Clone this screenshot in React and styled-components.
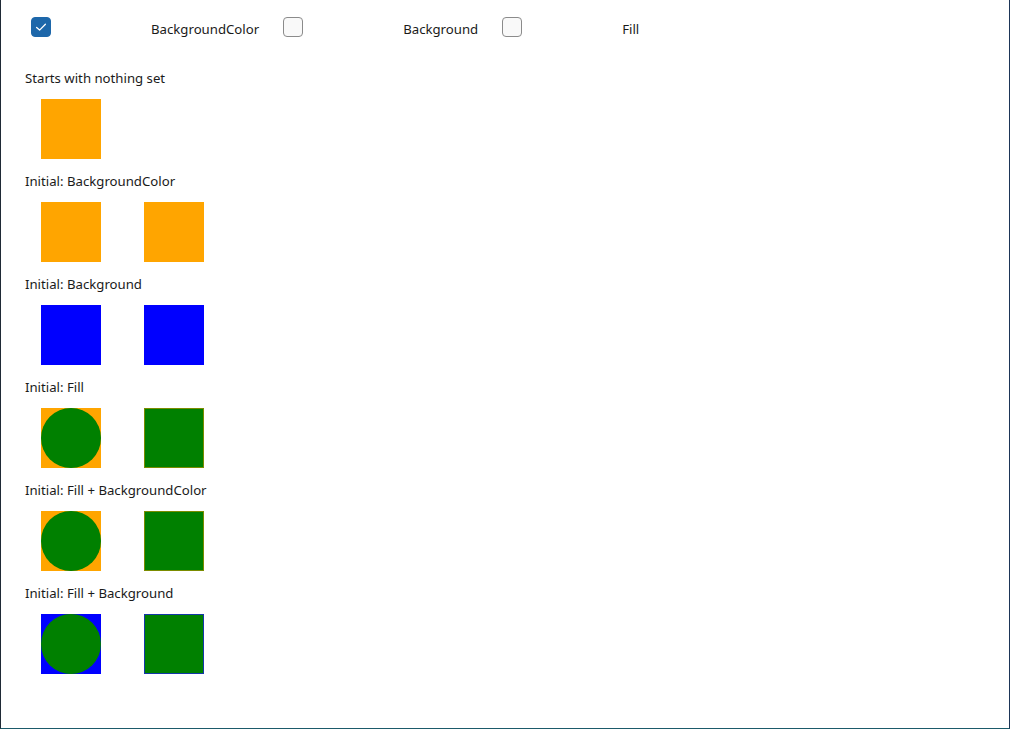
import React from 'react';
import styled, { createGlobalStyle } from 'styled-components';

const GlobalStyle = createGlobalStyle`
    html, body {
        margin: 0;
        padding: 0;
        background: #ffffff;
    }
    * {
        box-sizing: border-box;
    }
`;

const ORANGE = '#ffa500';
const BLUE = '#0000ff';
const GREEN = '#008000';

const sections = [
    { title: 'Starts with nothing set', items: [{ bg: ORANGE }] },
    { title: 'Initial: BackgroundColor', items: [{ bg: ORANGE }, { bg: ORANGE }] },
    { title: 'Initial: Background', items: [{ bg: BLUE }, { bg: BLUE }] },
    { title: 'Initial: Fill', items: [{ bg: ORANGE, circle: true }, { bg: GREEN, edge: '#7a8c00' }] },
    { title: 'Initial: Fill + BackgroundColor', items: [{ bg: ORANGE, circle: true }, { bg: GREEN, edge: '#7a8c00' }] },
    { title: 'Initial: Fill + Background', items: [{ bg: BLUE, circle: true }, { bg: GREEN, edge: '#1438a8' }] },
];

const toggles = [
    { label: 'BackgroundColor', checked: true },
    { label: 'Background', checked: false },
    { label: 'Fill', checked: false },
];

const App = () => {
    return (
        <>
            <GlobalStyle />
            <Window>
                <Toolbar>
                    {toggles.map((t) => (
                        <React.Fragment key={t.label}>
                            <CheckSlot>
                                <CheckBox $checked={t.checked}>
                                    {t.checked && (
                                        <svg width="14" height="14" viewBox="0 0 14 14">
                                            <path d="M2.6 7.4 L5.6 10.1 L11.4 4.2" fill="none" stroke="#ffffff" strokeWidth="1.3" strokeLinecap="round" strokeLinejoin="round" />
                                        </svg>
                                    )}
                                </CheckBox>
                            </CheckSlot>
                            <ToggleLabel>{t.label}</ToggleLabel>
                        </React.Fragment>
                    ))}
                </Toolbar>
                {sections.map((s) => (
                    <Section key={s.title}>
                        <Caption>{s.title}</Caption>
                        <SwatchRow>
                            {s.items.map((it, i) => (
                                <Swatch key={i} $bg={it.bg} $edge={it.edge}>
                                    {it.circle && <Circle />}
                                </Swatch>
                            ))}
                        </SwatchRow>
                    </Section>
                ))}
            </Window>
        </>
    );
};

const Window = styled.div`
    width: 1010px;
    height: 729px;
    background: #ffffff;
    border-left: 1px solid #1f2a36;
    border-right: 1px solid #1d3557;
    border-bottom: 1px solid #1b5a6a;
    padding-left: 24px;
    font-family: "Noto Sans", "Open Sans", sans-serif;
    color: #1a1a1a;
    overflow: hidden;
`;

const Toolbar = styled.div`
    display: flex;
    align-items: center;
    height: 54px;
    padding-left: 6px;
`;

const CheckSlot = styled.div`
    width: 120px;
    display: flex;
    align-items: center;
`;

const CheckBox = styled.div`
    width: 20px;
    height: 20px;
    border-radius: 4px;
    display: flex;
    align-items: center;
    justify-content: center;
    background: ${(p) => (p.$checked ? '#1d67aa' : '#f9f9f9')};
    border: 1px solid ${(p) => (p.$checked ? '#1d67aa' : '#8b8b8b')};
`;

const ToggleLabel = styled.span`
    font-size: 13.2px;
    line-height: 20px;
    padding-top: 4px;
    margin-right: 24px;
`;

const Section = styled.div`
    margin-top: 14px;
    & + & {
        margin-top: 12px;
    }
`;

const Caption = styled.div`
    font-size: 13.2px;
    line-height: 20px;
`;

const SwatchRow = styled.div`
    display: flex;
    gap: 43px;
    padding-left: 16px;
    margin-top: 11px;
`;

const Swatch = styled.div`
    width: 60px;
    height: 60px;
    background: ${(p) => p.$bg};
    border: ${(p) => (p.$edge ? `1px solid ${p.$edge}` : 'none')};
    display: flex;
`;

const Circle = styled.div`
    width: 100%;
    height: 100%;
    border-radius: 50%;
    background: ${GREEN};
`;

export default App;
